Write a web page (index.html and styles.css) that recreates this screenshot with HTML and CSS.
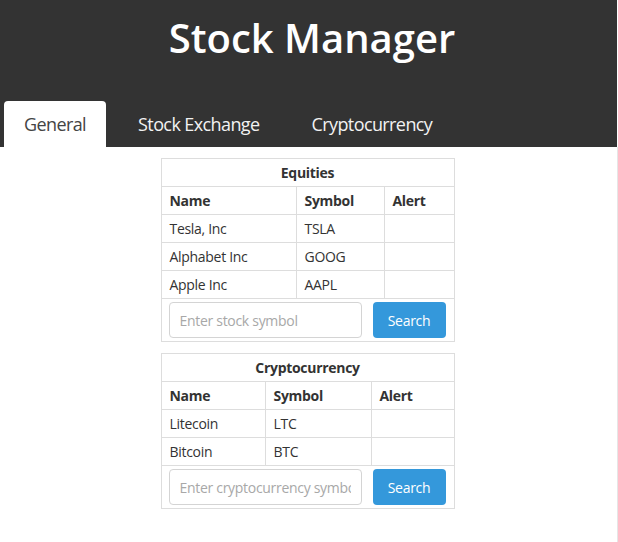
FILE: index.html
```html
<!DOCTYPE html>
<html lang="en">
<head>
<meta charset="utf-8">
<title>Stock Manager</title>
<link rel="stylesheet" href="styles.css">
</head>
<body>
<div class="app">
  <header class="header">
    <h1 class="title">Stock Manager</h1>
    <nav class="tabs">
      <a class="tab active">General</a>
      <a class="tab">Stock Exchange</a>
      <a class="tab">Cryptocurrency</a>
    </nav>
  </header>
  <main class="content">
    <table class="grid">
      <colgroup><col class="c1-name"><col class="c1-sym"><col class="c1-alert"></colgroup>
      <tr><th colspan="3" class="caption">Equities</th></tr>
      <tr><th>Name</th><th>Symbol</th><th>Alert</th></tr>
      <tr><td>Tesla, Inc</td><td>TSLA</td><td></td></tr>
      <tr><td>Alphabet Inc</td><td>GOOG</td><td></td></tr>
      <tr><td>Apple Inc</td><td>AAPL</td><td></td></tr>
      <tr><td colspan="3" class="search-cell">
        <div class="search">
          <input class="field" type="text" placeholder="Enter stock symbol">
          <button class="btn" type="button">Search</button>
        </div>
      </td></tr>
    </table>
    <table class="grid">
      <colgroup><col class="c2-name"><col class="c2-sym"><col class="c2-alert"></colgroup>
      <tr><th colspan="3" class="caption">Cryptocurrency</th></tr>
      <tr><th>Name</th><th>Symbol</th><th>Alert</th></tr>
      <tr><td>Litecoin</td><td>LTC</td><td></td></tr>
      <tr><td>Bitcoin</td><td>BTC</td><td></td></tr>
      <tr><td colspan="3" class="search-cell">
        <div class="search">
          <input class="field" type="text" placeholder="Enter cryptocurrency symbol">
          <button class="btn" type="button">Search</button>
        </div>
      </td></tr>
    </table>
  </main>
</div>
</body>
</html>
```
FILE: styles.css
```css
html, body {
  margin: 0;
  padding: 0;
  background: #fff;
}
body {
  font-family: "Open Sans", "Noto Sans", sans-serif;
  color: #333;
}
.app {
  width: 618px;
  min-height: 542px;
  display: flex;
  flex-direction: column;
}
.header {
  width: 617px;
  background: #333333;
  padding-top: 11px;
}
.title {
  margin: 0 0 36px;
  padding-left: 7px;
  font-size: 40px;
  line-height: 54px;
  font-weight: 600;
  color: #fff;
  text-align: center;
}
.tabs {
  display: flex;
  gap: 12px;
  padding-left: 4px;
  height: 46px;
}
.tab {
  padding: 0 20px;
  font-size: 18px;
  line-height: 46px;
  letter-spacing: -0.6px;
  color: #f2f2f2;
  border-radius: 4px 4px 0 0;
}
.tab.active {
  background: #fff;
  color: #444;
}
.content {
  flex: 1;
  box-sizing: border-box;
  border-right: 1px solid #e6e6e6;
  padding: 11px 2px 0 0;
  display: flex;
  flex-direction: column;
  align-items: center;
  gap: 11px;
}
.grid {
  border-collapse: collapse;
  width: 293px;
  table-layout: fixed;
  font-size: 14px;
  letter-spacing: -0.3px;
}
.grid th, .grid td {
  border: 1px solid #dddddd;
  padding: 4px 8px;
  line-height: 19px;
  text-align: left;
  white-space: nowrap;
  overflow: hidden;
}
.grid th {
  font-weight: 700;
}
.grid th.caption {
  text-align: center;
}
.c1-name { width: 135px; }
.c1-sym { width: 88px; }
.c1-alert { width: 70px; }
.c2-name { width: 104px; }
.c2-sym { width: 106px; }
.c2-alert { width: 83px; }
.grid td.search-cell {
  padding: 3px 8px 3px 7px;
}
.search {
  display: flex;
  gap: 11px;
}
.field {
  flex: 1;
  min-width: 0;
  height: 36px;
  box-sizing: border-box;
  border: 1px solid #d4d4d4;
  border-radius: 4px;
  padding: 0 10px;
  font-family: "Open Sans", "Noto Sans", sans-serif;
  font-size: 14px;
  letter-spacing: -0.3px;
  color: #333;
  background: #fff;
}
.field::placeholder {
  color: #a8a8a8;
}
.btn {
  width: 73px;
  height: 36px;
  border: none;
  border-radius: 4px;
  background: #3498db;
  color: #fff;
  font-family: "Open Sans", "Noto Sans", sans-serif;
  font-size: 14px;
  letter-spacing: -0.3px;
  padding: 0;
}
```
